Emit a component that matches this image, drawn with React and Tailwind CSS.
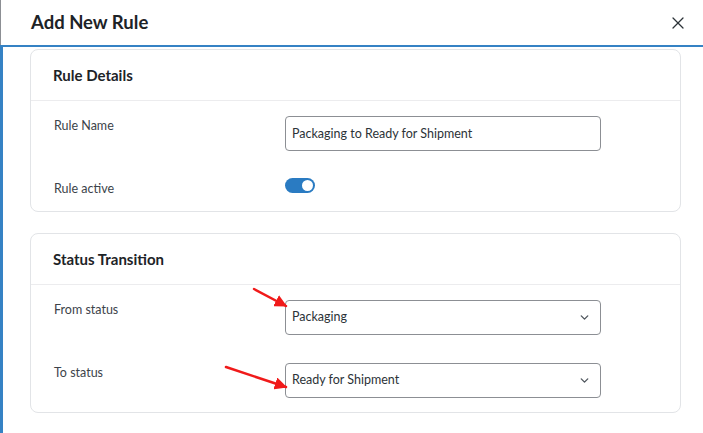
import { X, ChevronDown } from 'lucide-react';

const font = { fontFamily: 'Lato, "Noto Sans", sans-serif' };

function Card({ title, children, className = '' }) {
  return (
    <div className={`ml-[27px] w-[651px] rounded-lg border border-[#e2e4e7] bg-white ${className}`}>
      <div className="flex h-[51px] items-center border-b border-[#ececee] pl-[22px]">
        <h2 className="text-[15px] font-bold text-[#1d2327]">{title}</h2>
      </div>
      {children}
    </div>
  );
}

function Row({ label, children, className = '' }) {
  return (
    <div className={`flex items-start ${className}`}>
      <div className="w-[254px] pl-[23px] pt-[1px] text-[12.5px] leading-[18px] text-[#3c434a]">{label}</div>
      {children}
    </div>
  );
}

function Select({ value }) {
  return (
    <div className="flex h-[35px] w-[316px] items-center justify-between rounded border border-[#8c8f94] bg-white pl-[6px] pr-[9px] text-[12.5px] text-[#2c3338]">
      <span>{value}</span>
      <ChevronDown className="h-[13px] w-[13px] text-[#50575e]" strokeWidth={2.5} />
    </div>
  );
}

function Arrow({ x1, y1, x2, y2 }) {
  return (
    <line x1={x1} y1={y1} x2={x2} y2={y2} stroke="#f01a1a" strokeWidth="2.5" strokeLinecap="round" markerEnd="url(#head)" />
  );
}

export default function App() {
  return (
    <div className="relative h-[433px] w-[703px] overflow-hidden bg-white" style={font}>
      {/* Header */}
      <div className="flex h-[45px] items-center justify-between border-l border-[#8c8f94] pl-[30px] pr-[15px]">
        <h1 className="text-[18.5px] font-bold text-[#1d2327]">Add New Rule</h1>
        <X className="h-[20px] w-[20px] text-[#2c3338]" strokeWidth={1.5} />
      </div>

      {/* Body */}
      <div className="h-[388px] border-l-[3px] border-t-2 border-[#3582c4] pt-[2px]">
        <Card title="Rule Details" className="h-[163px]">
          <Row label="Rule Name" className="pt-[15px]">
            <input
              readOnly
              value="Packaging to Ready for Shipment"
              className="h-[35px] w-[316px] rounded border border-[#8c8f94] px-[6px] text-[12.5px] text-[#2c3338] outline-none"
              style={font}
            />
          </Row>
          <Row label="Rule active" className="pt-[28px]">
            <div className="mt-[-1px] flex h-[15px] w-[30px] items-center justify-end rounded-full bg-[#2a7bc2] pr-[2px]">
              <div className="h-[11px] w-[11px] rounded-full bg-white" />
            </div>
          </Row>
        </Card>

        <Card title="Status Transition" className="mt-[21px] h-[180px]">
          <Row label="From status" className="pt-[15px]">
            <Select value="Packaging" />
          </Row>
          <Row label="To status" className="pt-[28px]">
            <Select value="Ready for Shipment" />
          </Row>
        </Card>
      </div>

      {/* Annotation arrows */}
      <svg className="pointer-events-none absolute left-0 top-0" width="703" height="433">
        <defs>
          <marker id="head" markerWidth="5" markerHeight="5" refX="4.5" refY="2.5" orient="auto" markerUnits="strokeWidth">
            <path d="M0,0 L5,2.5 L0,5 Z" fill="#f01a1a" />
          </marker>
        </defs>
        <Arrow x1={254} y1={289} x2={286} y2={306} />
        <Arrow x1={226} y1={367} x2={286} y2={387} />
      </svg>
    </div>
  );
}
